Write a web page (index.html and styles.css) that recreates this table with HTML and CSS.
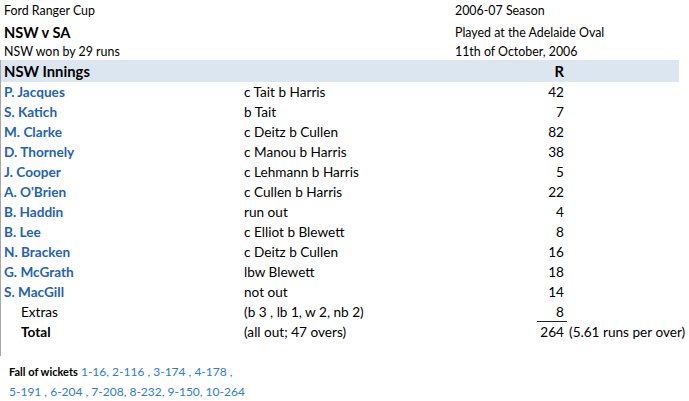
FILE: index.html
```html
<!DOCTYPE html>
<html>
<head>
<meta charset="utf-8">
<link rel="stylesheet" href="styles.css">
</head>
<body>
<div class="sheet">
  <div class="meta">
    <div class="m1">Ford Ranger Cup</div><div class="m1">2006-07 Season</div>
    <div class="m2 title">NSW v SA</div><div class="m2">Played at the Adelaide Oval</div>
    <div class="m3">NSW won by 29 runs</div><div class="m3">11th of October, 2006</div>
  </div>
  <div class="innings">
    <div class="row band"><span class="hd">NSW Innings</span><span></span><span class="runs hdr">R</span><span></span></div>
    <div class="row"><span class="name">P. Jacques</span><span>c Tait b Harris</span><span class="runs">42</span><span></span></div>
    <div class="row"><span class="name">S. Katich</span><span>b Tait</span><span class="runs">7</span><span></span></div>
    <div class="row"><span class="name">M. Clarke</span><span>c Deitz b Cullen</span><span class="runs">82</span><span></span></div>
    <div class="row"><span class="name">D. Thornely</span><span>c Manou b Harris</span><span class="runs">38</span><span></span></div>
    <div class="row"><span class="name">J. Cooper</span><span>c Lehmann b Harris</span><span class="runs">5</span><span></span></div>
    <div class="row"><span class="name">A. O'Brien</span><span>c Cullen b Harris</span><span class="runs">22</span><span></span></div>
    <div class="row"><span class="name">B. Haddin</span><span>run out</span><span class="runs">4</span><span></span></div>
    <div class="row"><span class="name">B. Lee</span><span>c Elliot b Blewett</span><span class="runs">8</span><span></span></div>
    <div class="row"><span class="name">N. Bracken</span><span>c Deitz b Cullen</span><span class="runs">16</span><span></span></div>
    <div class="row"><span class="name">G. McGrath</span><span>lbw Blewett</span><span class="runs">18</span><span></span></div>
    <div class="row"><span class="name">S. MacGill</span><span>not out</span><span class="runs">14</span><span></span></div>
    <div class="row"><span class="sub">Extras</span><span>(b 3 , lb 1, w 2, nb 2)</span><span class="runs sum">8</span><span></span></div>
    <div class="row"><span class="sub total">Total</span><span>(all out; 47 overs)</span><span class="runs">264</span><span class="note">(5.61 runs per over)</span></div>
  </div>
  <div class="fow">
    <div><b>Fall of wickets</b> <span class="w">1-16, 2-116 , 3-174 , 4-178 ,</span></div>
    <div><span class="w">5-191 , 6-204 , 7-208, 8-232, 9-150, 10-264</span></div>
  </div>
</div>
</body>
</html>
```
FILE: styles.css
```css
html, body {
  margin: 0;
  padding: 0;
  background: #ffffff;
}
body {
  font-family: Lato, "Open Sans", sans-serif;
  color: #000;
}
.sheet {
  width: 689px;
}
.meta {
  display: grid;
  grid-template-columns: 451px 1fr;
  padding-left: 4px;
  font-size: 12.4px;
}
.m1 { height: 22px; line-height: 22px; }
.m2 { height: 21px; line-height: 21px; }
.m3 { height: 17px; line-height: 17px; }
.title {
  font-weight: 700;
  font-size: 14.6px;
}
.innings {
  width: 678px;
  border-left: 1px solid #a8a8a8;
  padding-bottom: 14px;
}
.row {
  display: grid;
  grid-template-columns: 240px 293px 30px 1fr;
  padding-left: 3px;
  height: 20px;
  line-height: 20px;
  font-size: 13.6px;
  white-space: nowrap;
}
.row.band {
  background: #dce6f1;
  height: 22px;
  line-height: 22px;
}
.hd, .hdr {
  font-weight: 700;
  font-size: 14.8px;
}
.name {
  color: #1f63b4;
  font-weight: 700;
}
.sub {
  padding-left: 17px;
}
.total {
  font-weight: 700;
}
.runs {
  text-align: right;
  padding-right: 3px;
}
.sum {
  border-bottom: 1px solid #222;
  height: 19px;
}
.note {
  padding-left: 2px;
}
.fow {
  margin-top: 6px;
  padding-left: 9px;
  font-size: 12px;
}
.fow div {
  height: 20px;
  line-height: 20px;
}
.fow b {
  font-weight: 700;
  font-size: 11px;
}
.w {
  color: #2f7bd0;
}
```
